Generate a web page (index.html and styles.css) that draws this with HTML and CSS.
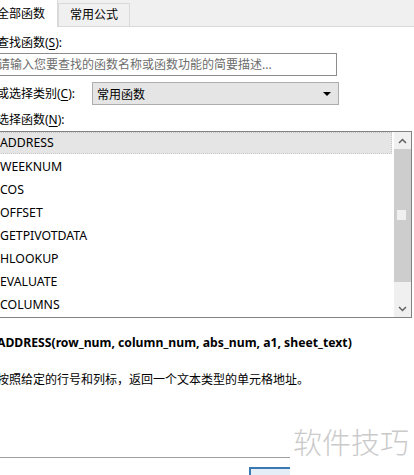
FILE: index.html
```html
<!DOCTYPE html>
<html lang="zh-CN">
<head>
<meta charset="UTF-8">
<title>插入函数</title>
<link rel="stylesheet" href="styles.css">
</head>
<body>
    <div class="tabs">
        <div class="tab active">全部函数</div>
        <div class="tab">常用公式</div>
    </div>

    <div class="panel">
        <div class="label search-label">查找函数(<u>S</u>):</div>
        <div class="search">请输入您要查找的函数名称或函数功能的简要描述...</div>

        <div class="category">
            <span class="label">或选择类别(<u>C</u>):</span>
            <div class="select">
                <span>常用函数</span>
                <span class="arrow"></span>
            </div>
        </div>

        <div class="label list-label">选择函数(<u>N</u>):</div>
        <div class="listbox">
            <ul class="items">
                <li class="selected">ADDRESS</li>
                <li>WEEKNUM</li>
                <li>COS</li>
                <li>OFFSET</li>
                <li>GETPIVOTDATA</li>
                <li>HLOOKUP</li>
                <li>EVALUATE</li>
                <li>COLUMNS</li>
            </ul>
            <div class="scrollbar">
                <div class="sb-btn">
                    <svg width="9" height="6" viewBox="0 0 9 6"><polyline points="1,5 4.5,1.5 8,5" fill="none" stroke="#606060" stroke-width="1.5"/></svg>
                </div>
                <div class="sb-thumb"><span class="grip"></span></div>
                <div class="sb-track"></div>
                <div class="sb-btn">
                    <svg width="9" height="6" viewBox="0 0 9 6"><polyline points="1,1 4.5,4.5 8,1" fill="none" stroke="#606060" stroke-width="1.5"/></svg>
                </div>
            </div>
        </div>

        <div class="signature">ADDRESS(row_num, column_num, abs_num, a1, sheet_text)</div>
        <div class="desc">按照给定的行号和列标，返回一个文本类型的单元格地址。</div>
    </div>

    <div class="footer">
        <div class="ok-btn"></div>
    </div>

    <div class="watermark">软件技巧</div>
</body>
</html>
```

FILE: styles.css
```css
body {
    margin: 0;
    width: 414px;
    height: 475px;
    overflow: hidden;
    position: relative;
    background-color: #ffffff;
    font-family: "Noto Sans", "Noto Sans CJK SC", sans-serif;
    font-size: 12px;
    color: #000000;
}

.tabs {
    display: flex;
    align-items: flex-end;
    height: 26px;
    background-color: #f0f0f0;
    border-bottom: 1px solid #d9d9d9;
    margin-left: -3px;
}

.tab {
    height: 22px;
    line-height: 22px;
    padding: 0 11px;
    border: 1px solid #d9d9d9;
    border-bottom: none;
    background-color: #f0f0f0;
    font-size: 12px;
}

.tab.active {
    height: 27px;
    line-height: 28px;
    margin-bottom: -1px;
    padding: 0 10px 0 0;
    width: 50px;
    border: none;
    border-right: 1px solid #d9d9d9;
    background-color: #ffffff;
}

.panel {
    margin-left: -3px;
    display: flex;
    flex-direction: column;
}

.label {
    line-height: 16px;
}

.label u {
    text-underline-offset: 2px;
}

.search-label {
    margin-top: 8px;
}

.search {
    margin-top: 2px;
    height: 21px;
    width: 338px;
    border: 1px solid #8c8c8c;
    line-height: 21px;
    color: #6d6d6d;
}

.category {
    margin-top: 6px;
    display: flex;
    align-items: center;
    height: 23px;
}

.category .label {
    width: 95px;
}

.select {
    display: flex;
    align-items: center;
    justify-content: space-between;
    width: 234px;
    height: 21px;
    border: 1px solid #adadad;
    background-color: #e5e5e5;
    padding-left: 4px;
    padding-right: 7px;
}

.arrow {
    width: 0;
    height: 0;
    border-left: 4px solid transparent;
    border-right: 4px solid transparent;
    border-top: 4px solid #000000;
}

.list-label {
    margin-top: 7px;
}

.listbox {
    margin-top: 3px;
    display: flex;
    justify-content: space-between;
    width: 413px;
    height: 185px;
    border: 1px solid #828282;
}

.items {
    list-style: none;
    margin: 0;
    padding: 0;
    width: 394px;
}

.items li {
    height: 23px;
    line-height: 23px;
    padding-left: 2px;
    font-size: 12.3px;
}

.items li.selected {
    height: 22px;
    line-height: 22px;
    background-color: #e5e5e5;
    outline: 1px dotted #c8c8c8;
    outline-offset: -1px;
    margin-bottom: 1px;
}

.scrollbar {
    width: 17px;
    display: flex;
    flex-direction: column;
    background-color: #f0f0f0;
}

.sb-btn {
    height: 17px;
    display: flex;
    align-items: center;
    justify-content: center;
}

.sb-thumb {
    height: 133px;
    background-color: #cdcdcd;
    position: relative;
}

.grip {
    position: absolute;
    left: 3px;
    top: 61px;
    width: 9px;
    height: 10px;
    background-color: #f0f0f0;
}

.sb-track {
    flex: 1;
}

.signature {
    margin-top: 16px;
    line-height: 18px;
    font-weight: bold;
    font-size: 12.2px;
}

.desc {
    margin-top: 19px;
    line-height: 18px;
}

.footer {
    position: absolute;
    left: 0;
    top: 457px;
    width: 414px;
    height: 18px;
    border-top: 1px solid #a0a0a0;
}

.ok-btn {
    margin: 9px 0 0 249px;
    width: 80px;
    height: 20px;
    border: 2px solid #3b79b4;
    background-color: #e5eef6;
}

.watermark {
    position: absolute;
    left: 290px;
    top: 420px;
    width: 124px;
    height: 55px;
    background-color: #ffffff;
    color: #cacaca;
    font-family: "Noto Sans CJK SC", sans-serif;
    font-weight: 300;
    font-size: 29px;
    line-height: 42px;
    padding-left: 3px;
}
```
